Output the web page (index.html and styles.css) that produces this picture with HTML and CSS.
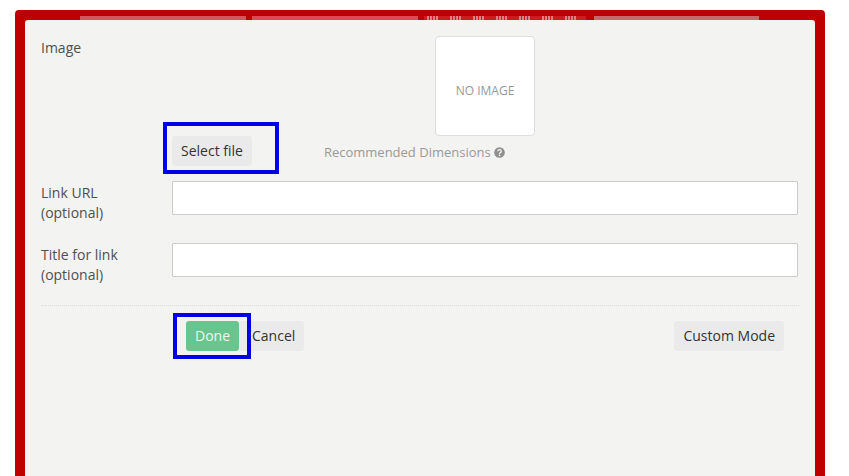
FILE: index.html
```html
<!DOCTYPE html>
<html lang="en">
<head>
<meta charset="utf-8">
<title>Image block</title>
<link rel="stylesheet" href="styles.css">
</head>
<body>
<div class="frame">
  <div class="strip">
    <div class="thumb thumb-a"></div>
    <div class="thumb thumb-b"></div>
    <div class="thumb thumb-c"></div>
    <div class="thumb thumb-d"></div>
  </div>
  <div class="panel">
    <div class="row row-image">
      <div class="label">Image</div>
      <div class="image-control">
        <div class="preview">NO IMAGE</div>
        <div class="file-row">
          <div class="highlight highlight-file"></div>
          <button class="btn" type="button">Select file</button>
          <span class="hint">Recommended Dimensions
            <svg class="hint-icon" viewBox="0 0 12 12" aria-hidden="true"><circle cx="6" cy="6" r="5.8" fill="#8f8f8f"/><path d="M4.2 4.7a1.85 1.75 0 1 1 2.8 1.5c-.7.4-1 .7-1 1.3" fill="none" stroke="#f3f3f2" stroke-width="1.4"/><rect x="5.2" y="8.3" width="1.7" height="1.6" fill="#f3f3f2"/></svg>
          </span>
        </div>
      </div>
    </div>
    <div class="row row-field">
      <label class="label">Link URL<br>(optional)</label>
      <input class="input" type="text">
    </div>
    <div class="row row-field">
      <label class="label">Title for link<br>(optional)</label>
      <input class="input" type="text">
    </div>
    <div class="actions">
      <div class="actions-left">
        <div class="highlight highlight-done"></div>
        <button class="btn btn-done" type="button">Done</button>
        <button class="btn btn-cancel" type="button">Cancel</button>
      </div>
      <button class="btn" type="button">Custom Mode</button>
    </div>
  </div>
</div>
</body>
</html>
```
FILE: styles.css
```css
* { box-sizing: border-box; }
html, body { height: 100%; }
body {
  margin: 0;
  background: #fff;
  overflow: hidden;
  font-family: "Open Sans", sans-serif;
  font-size: 14px;
  line-height: 20px;
  color: #333;
}
.frame {
  width: 810px;
  height: 466px;
  margin: 10px 0 0 15px;
  padding: 6px 10px 0;
  background: #bf0000;
  border-radius: 4px 4px 0 0;
}
.strip {
  display: flex;
  height: 4px;
  margin-left: 55px;
}
.thumb { height: 4px; }
.thumb-a { width: 166px; margin-right: 6px; background: #d2575e; }
.thumb-b { width: 166px; margin-right: 6px; background: #dc4a57; }
.thumb-c {
  width: 162px;
  margin-right: 8px;
  background-color: #cb1c24;
  background-image: repeating-linear-gradient(90deg,
    transparent 0 3px,
    #de8086 3px 5px, transparent 5px 6px,
    #de8086 6px 8px, transparent 8px 9px,
    #de8086 9px 11px, transparent 11px 12px,
    #de8086 12px 14px, transparent 14px 23px);
}
.thumb-d { width: 165px; background: #c56a6c; }
.panel {
  height: 456px;
  padding: 16px 16px 0;
  background: #f3f3f2;
  border-radius: 3px 3px 0 0;
}
.row { display: flex; }
.label { display: block; width: 131px; flex: none; color: #4f4f4f; }
.row-image .label { padding-top: 2px; }
.image-control { flex: 1; margin-right: 1px; }
.preview {
  display: flex;
  align-items: center;
  justify-content: center;
  width: 100px;
  height: 100px;
  margin: 0 auto;
  padding-top: 10px;
  background: #fff;
  border: 1px solid #ddd;
  border-radius: 4px;
  font-size: 12px;
  color: #999;
}
.file-row { position: relative; display: flex; align-items: flex-start; }
.btn {
  height: 30px;
  padding: 0 9px;
  border: 0;
  border-radius: 3px;
  background: #eaeaea;
  font: inherit;
  color: #333;
}
.hint {
  display: flex;
  align-items: center;
  gap: 3px;
  margin: 6px 0 0 72px;
  font-size: 13px;
  line-height: 20px;
  color: #999;
}
.hint-icon { width: 11px; height: 11px; }
.highlight {
  position: absolute;
  border: 4px solid #0000e6;
  pointer-events: none;
}
.highlight-file { left: -9px; top: -14px; width: 116px; height: 52px; }
.row-field { align-items: flex-start; }
.row-field:nth-child(2) { margin-top: 15px; }
.row-field:nth-child(3) { margin-top: 20px; }
.row-field .label { margin-top: 2px; }
.input {
  flex: none;
  width: 626px;
  height: 34px;
  background: #fff;
  border: 1px solid #ccc;
  border-radius: 1px;
  font: inherit;
}
.actions {
  display: flex;
  justify-content: space-between;
  margin-top: 20px;
  padding: 15px 15px 0 131px;
  border-top: 1px dotted #ddd;
}
.actions-left { position: relative; display: flex; padding-left: 14px; }
.highlight-done { left: 1px; top: -8px; width: 78px; height: 46px; z-index: 1; }
.btn-done { width: 53px; background: #67c58d; color: #f1f5ef; }
.btn-cancel { width: 65px; padding: 0 9px 0 13px; text-align: right; }
```
